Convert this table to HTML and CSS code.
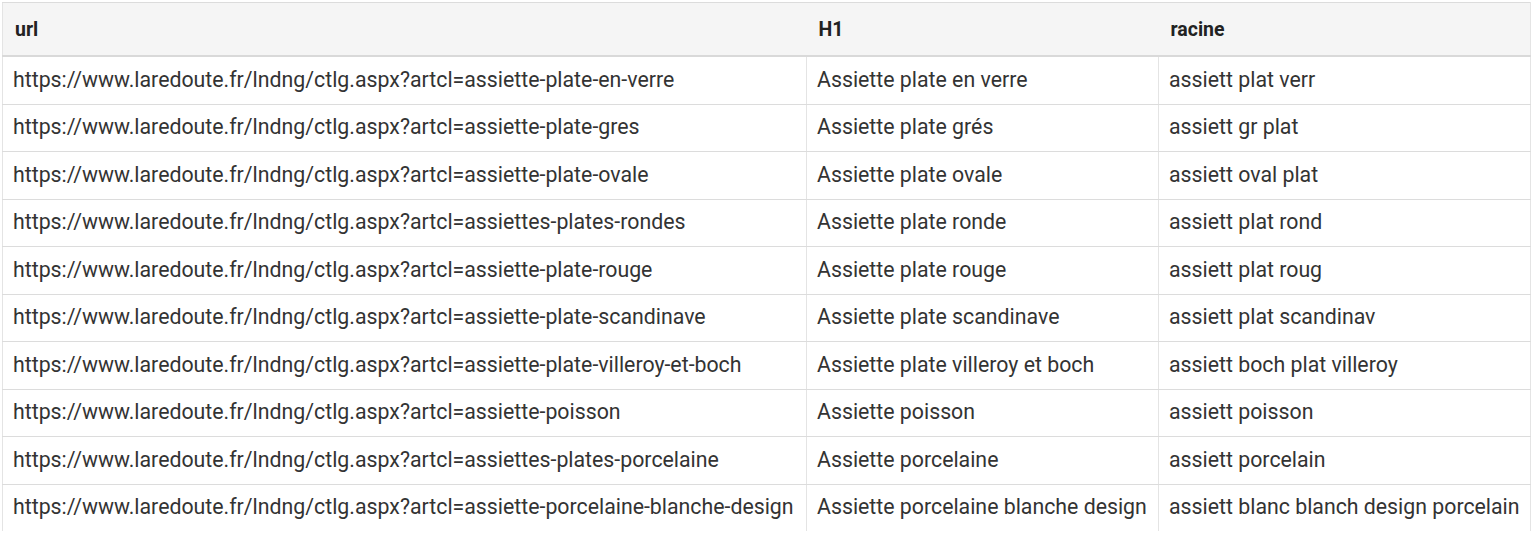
FILE: index.html
```html
<!DOCTYPE html>
<html>
<head>
<meta charset="utf-8">
<link rel="stylesheet" href="styles.css">
</head>
<body>
<table class="grid">
  <colgroup>
    <col class="c-url">
    <col class="c-h1">
    <col class="c-rac">
  </colgroup>
  <thead>
    <tr><th>url</th><th>H1</th><th>racine</th></tr>
  </thead>
  <tbody>
    <tr><td>https://www.laredoute.fr/lndng/ctlg.aspx?artcl=assiette-plate-en-verre</td><td>Assiette plate en verre</td><td>assiett plat verr</td></tr>
    <tr><td>https://www.laredoute.fr/lndng/ctlg.aspx?artcl=assiette-plate-gres</td><td>Assiette plate grés</td><td>assiett gr plat</td></tr>
    <tr><td>https://www.laredoute.fr/lndng/ctlg.aspx?artcl=assiette-plate-ovale</td><td>Assiette plate ovale</td><td>assiett oval plat</td></tr>
    <tr><td>https://www.laredoute.fr/lndng/ctlg.aspx?artcl=assiettes-plates-rondes</td><td>Assiette plate ronde</td><td>assiett plat rond</td></tr>
    <tr><td>https://www.laredoute.fr/lndng/ctlg.aspx?artcl=assiette-plate-rouge</td><td>Assiette plate rouge</td><td>assiett plat roug</td></tr>
    <tr><td>https://www.laredoute.fr/lndng/ctlg.aspx?artcl=assiette-plate-scandinave</td><td>Assiette plate scandinave</td><td>assiett plat scandinav</td></tr>
    <tr><td>https://www.laredoute.fr/lndng/ctlg.aspx?artcl=assiette-plate-villeroy-et-boch</td><td>Assiette plate villeroy et boch</td><td>assiett boch plat villeroy</td></tr>
    <tr><td>https://www.laredoute.fr/lndng/ctlg.aspx?artcl=assiette-poisson</td><td>Assiette poisson</td><td>assiett poisson</td></tr>
    <tr><td>https://www.laredoute.fr/lndng/ctlg.aspx?artcl=assiettes-plates-porcelaine</td><td>Assiette porcelaine</td><td>assiett porcelain</td></tr>
    <tr><td>https://www.laredoute.fr/lndng/ctlg.aspx?artcl=assiette-porcelaine-blanche-design</td><td>Assiette porcelaine blanche design</td><td>assiett blanc blanch design porcelain</td></tr>
  </tbody>
</table>
</body>
</html>
```
FILE: styles.css
```css
html, body {
  margin: 0;
  padding: 0;
  background: #ffffff;
}
body {
  padding: 2px 0 0 2px;
  font-family: Roboto, "Liberation Sans", sans-serif;
  color: #333333;
  overflow: hidden;
}
.grid {
  border-collapse: collapse;
  table-layout: fixed;
  width: 1528px;
  border-top: 1px solid #dcdcdc;
  border-left: 1px solid #e4e4e4;
  border-right: 1px solid #e4e4e4;
}
.c-url { width: 804px; }
.c-h1 { width: 352px; }
.c-rac { width: 372px; }
.grid th {
  background: #f5f5f5;
  font-weight: 700;
  font-size: 19.5px;
  text-align: left;
  height: 52px;
  padding: 0 11px 0 12px;
  border-bottom: 2px solid #d9d9d9;
  color: #222;
}
.grid td {
  font-size: 21.3px;
  height: 44.5px;
  padding: 0 10px 2px;
  white-space: nowrap;
  border-bottom: 1px solid #dcdcdc;
  border-right: 1px solid #e4e4e4;
}
.grid td:last-child { border-right: none; }
.grid tbody tr:last-child td { border-bottom: none; }
```
